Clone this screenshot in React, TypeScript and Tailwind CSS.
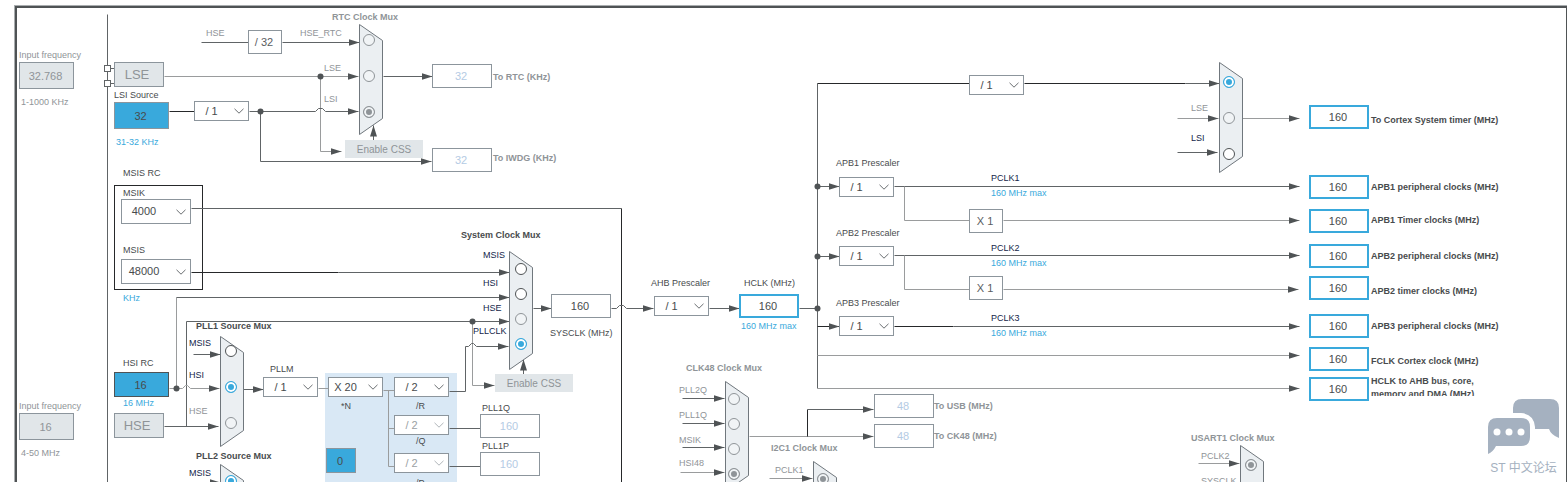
import { useState } from "react";

const tones = {
    text: "text-[#484b4d]",
    navy: "text-[#14264a]",
    muted: "text-[#8f9498]",
    blue: "text-[#39a9dc]",
}

const fieldTones = {
    plain: "border border-[#8c959c] bg-white text-[#484b4d]",
    faded: "border border-[#8c959c] bg-white text-[#b4cbe4]",
    editable: "border-2 border-[#39a9dc] bg-white text-[#484b4d]",
    source: "border border-[#8c959c] bg-[#39a9dc] text-[#484b4d]",
    activeSource: "border border-[#4f5355] bg-[#39a9dc] text-[#484b4d]",
    disabled: "border border-[#8c959c] bg-[#e1e6e9] text-[#8f9498]",
}

const strokes = {
    mid: "#606466",
    light: "#9a9c9d",
    dark: "#26282a",
}

type Tone = keyof typeof tones
type FieldTone = keyof typeof fieldTones
type Stroke = keyof typeof strokes

function Label({ at, text, tone = "text", bold = false, htmlFor }: { at: string, text: string, tone?: Tone, bold?: boolean, htmlFor?: string }) {
    const style = `absolute whitespace-nowrap text-[9px] leading-3 ${at} ${tones[tone]} ${bold ? "font-bold" : ""}`

    if (htmlFor) {
        return <label htmlFor={htmlFor} className={style}>{text}</label>
    }
    return <span className={style}>{text}</span>
}

function Field({ id, at, value, tone = "plain", size = "h-6 w-[60px]", name }: { id: string, at: string, value: string, tone?: FieldTone, size?: string, name?: string }) {
    const [current, setCurrent] = useState(value)

    return (
        <input
            id={id}
            type="text"
            value={current}
            onChange={(e) => setCurrent(e.target.value)}
            aria-label={name}
            className={`absolute pr-0.5 text-center text-[11px] outline-none ${size} ${at} ${fieldTones[tone]}`}
        />
    )
}

function Prescaler({ id, at, value, options = [], size = "h-5 w-[55px] pr-5", faded = false, name }: { id: string, at: string, value: string, options?: string[], size?: string, faded?: boolean, name?: string }) {
    return (
        <div className={`absolute ${at}`}>
            <select
                id={id}
                defaultValue={value}
                aria-label={name}
                className={`block appearance-none border border-[#8c959c] bg-white text-center text-[11px] [text-align-last:center] ${size} ${faded ? "text-[#9a9fa3]" : "text-[#484b4d]"}`}
            >
                <option>{value}</option>
                {options.map((o) => <option key={o}>{o}</option>)}
            </select>
            <svg
                viewBox="0 0 10 6"
                className={`pointer-events-none absolute inset-y-0 right-[5px] my-auto h-1.5 w-2.5 ${faded ? "text-[#b0b5b9]" : "text-[#6a6e71]"}`}
                fill="none"
                stroke="currentColor"
            >
                <path d="M0.5 0.8L5 5.2L9.5 0.8" />
            </svg>
        </div>
    )
}

function Operator({ at, text }: { at: string, text: string }) {
    return (
        <div className={`absolute flex h-6 w-[34px] items-center justify-center border border-[#8c959c] bg-white pr-0.5 text-[11px] text-[#5a5d5f] ${at}`}>
            {text}
        </div>
    )
}

function Oscillator({ at, text }: { at: string, text: string }) {
    return (
        <button className={`absolute h-[25px] w-[50px] border border-[#8c959c] bg-[#e1e6e9] pr-1 text-[13px] leading-4 text-[#8f9498] ${at}`}>
            {text}
        </button>
    )
}

type Choice = { name: string, checked?: boolean, off?: boolean }

function Mux({ name, at, height, choices, spacing }: { name: string, at: string, height: number, choices: Choice[], spacing: string }) {
    return (
        <div role="radiogroup" aria-label={name} className={`absolute w-6 ${at}`}>
            <svg className="absolute left-0 top-0 overflow-visible" width="24" height={height}>
                <polygon points={`0,0 23,16 23,${height - 16} 0,${height}`} transform="translate(.5 .5)" fill="#ebeff2" stroke="#70777d" />
            </svg>
            <div className={`relative flex flex-col items-start ${spacing}`}>
                {choices.map((c) => (
                    <input
                        key={c.name}
                        type="radio"
                        name={name}
                        aria-label={c.name}
                        defaultChecked={c.checked}
                        className={c.off
                            ? "size-3 shrink-0 appearance-none rounded-full border border-[#8f9498] bg-[#f1f4f6] checked:bg-[#8f9498] checked:shadow-[inset_0_0_0_2px_#f1f4f6]"
                            : "size-3 shrink-0 appearance-none rounded-full border border-[#4f5355] bg-white checked:border-[#39a9dc] checked:bg-[#39a9dc] checked:shadow-[inset_0_0_0_2px_#ffffff]"}
                    />
                ))}
            </div>
        </div>
    )
}

// d, colour, and whether the wire ends in an arrow head
const wires: [string, Stroke, boolean][] = [
    // RTC / IWDG
    ["M107 14V900", "mid", false],
    ["M110 68H114M110 83H114", "mid", false],
    ["M201 42H248", "mid", false],
    ["M282 42H359", "mid", true],
    ["M164 76H358", "light", true],
    ["M320 76V151H341", "light", true],
    ["M169 111H194", "dark", false],
    ["M249 111H315L318 108H322L325 111H358", "mid", true],
    ["M260 111V161H431", "mid", true],
    ["M383 76H432", "mid", true],
    ["M373 140V125", "mid", true],
    // MSIS RC
    ["M191 208H621", "mid", false],
    ["M621 208V900", "dark", false],
    ["M191 272H338", "dark", false],
    ["M338 272H509", "mid", true],
    // HSI and HSE
    ["M176 388V297", "light", false],
    ["M176 297H509", "mid", true],
    ["M186 426V321H509", "mid", true],
    ["M472 321V385H494", "light", true],
    ["M169 388H182L185 385H187L190 388H219", "light", true],
    ["M164 426H218", "mid", true],
    // PLL1
    ["M193 354H220", "mid", true],
    ["M243 389H263", "mid", true],
    ["M193 482H220", "mid", true],
    ["M318 388H328", "light", false],
    ["M383 390H394M388 390V466H394M388 428H394", "light", false],
    ["M449 391H465V346H468L471 343H473L476 346H508", "mid", true],
    ["M449 428H480M449 466H480", "mid", false],
    // system clock
    ["M523 374V359", "mid", true],
    ["M533 308H551", "mid", true],
    ["M611 308H616L619 305H623L626 308H653", "mid", true],
    ["M709 308H739", "mid", true],
    ["M799 308H817", "mid", false],
    // buses
    ["M817 388V83", "mid", false],
    ["M817 83H969M1024 83H1185", "dark", false],
    ["M1185 83H1219", "mid", true],
    ["M817 186H839", "mid", true],
    ["M817 256H839", "mid", true],
    ["M817 326H839", "dark", true],
    ["M894 186H1299", "mid", true],
    ["M904 186V220H969", "light", false],
    ["M1003 220H1299", "light", true],
    ["M894 255H1299", "mid", true],
    ["M904 255V289H969", "light", false],
    ["M1003 289H1298", "light", true],
    ["M894 326H953", "dark", false],
    ["M953 326H1299", "mid", true],
    ["M817 355H1299", "light", true],
    ["M817 388H1299", "light", true],
    ["M1177 118H1218", "light", true],
    ["M1177 152H1217", "mid", true],
    ["M1242 118H1299", "light", true],
    // CLK48, I2C1, USART1
    ["M682 398H724", "mid", true],
    ["M682 423H724", "mid", true],
    ["M682 447H724", "mid", true],
    ["M680 472H724", "light", true],
    ["M749 436H873", "light", true],
    ["M807 436V409", "dark", false],
    ["M807 409H873", "mid", true],
    ["M769 478H812", "light", true],
    ["M1198 463H1239", "light", true],
]

const dots = [[320, 76], [260, 111], [176, 388], [472, 321], [817, 186], [817, 256], [817, 308]]

function Wires() {
    return (
        <svg className="absolute inset-0 h-full w-full" fill="none">
            <defs>
                <marker id="head" markerUnits="userSpaceOnUse" markerWidth="12" markerHeight="8" refX="11" refY="4" orient="auto">
                    <path d="M0 0.5L11 4L0 7.5z" fill="#4f5355" />
                </marker>
            </defs>
            <rect x="325" y="373" width="132" height="600" fill="#d9e8f5" />
            <g transform="translate(.5 .5)">
                <rect x="114" y="185" width="88" height="104" stroke="#26282a" />
                {wires.map(([d, stroke, arrow]) => (
                    <path key={d} d={d} stroke={strokes[stroke]} markerEnd={arrow ? "url(#head)" : undefined} />
                ))}
                {dots.map(([x, y]) => <circle key={`${x}-${y}`} cx={x} cy={y} r="3" fill="#4f5355" />)}
                <rect x="104" y="65" width="6" height="6" fill="#fff" stroke="#606466" />
                <rect x="104" y="80" width="6" height="6" fill="#fff" stroke="#606466" />
            </g>
        </svg>
    )
}

const outputs = [
    { id: "cortex", box: "left-[1309px] top-[105px]", label: "left-[1371px] top-[114px]", text: "To Cortex System timer (MHz)" },
    { id: "apb1p", box: "left-[1309px] top-[175px]", label: "left-[1371px] top-[181px]", text: "APB1 peripheral clocks (MHz)" },
    { id: "apb1t", box: "left-[1309px] top-[209px]", label: "left-[1371px] top-[214px]", text: "APB1 Timer clocks (MHz)" },
    { id: "apb2p", box: "left-[1309px] top-[244px]", label: "left-[1371px] top-[250px]", text: "APB2 peripheral clocks (MHz)" },
    { id: "apb2t", box: "left-[1309px] top-[276px]", label: "left-[1371px] top-[285px]", text: "APB2 timer clocks (MHz)" },
    { id: "apb3p", box: "left-[1309px] top-[314px]", label: "left-[1371px] top-[320px]", text: "APB3 peripheral clocks (MHz)" },
    { id: "fclk", box: "left-[1309px] top-[347px]", label: "left-[1371px] top-[355px]", text: "FCLK Cortex clock (MHz)" },
]

function RtcSection() {
    return (
        <>
            <Label at="left-[19px] top-[49px]" text="Input frequency" tone="muted" htmlFor="lse-in" />
            <Field id="lse-in" at="left-[19px] top-[62px]" size="h-[27px] w-[55px]" value="32.768" tone="disabled" />
            <Label at="left-[21px] top-[96px]" text="1-1000 KHz" tone="muted" />
            <Oscillator at="left-[114px] top-[62px]" text="LSE" />
            <Label at="left-[114px] top-[89px]" text="LSI Source" htmlFor="lsi" />
            <Field id="lsi" at="left-[114px] top-[102px]" size="h-[27px] w-[55px]" value="32" tone="source" />
            <Label at="left-[116px] top-[136px]" text="31-32 KHz" tone="blue" />
            <Prescaler id="lsi-div" name="LSI divider" at="left-[194px] top-[101px]" value="/ 1" options={["/ 128"]} />

            <Label at="left-[206px] top-[27px]" text="HSE" tone="muted" />
            <Operator at="left-[248px] top-[30px]" text="/ 32" />
            <Label at="left-[300px] top-[27px]" text="HSE_RTC" tone="muted" />
            <Label at="left-[324px] top-[62px]" text="LSE" tone="muted" />
            <Label at="left-[324px] top-[93px]" text="LSI" tone="muted" />
            <Label at="left-[332px] top-[11px]" text="RTC Clock Mux" tone="muted" bold />
            <Mux
                name="RTC Clock Mux"
                at="left-[359px] top-6"
                height={110}
                spacing="gap-6 pl-1 pt-2.5"
                choices={[{ name: "HSE_RTC", off: true }, { name: "LSE", off: true }, { name: "LSI", off: true, checked: true }]}
            />
            <button className="absolute left-[345px] top-[140px] h-[18px] w-[78px] bg-[#e1e6e9] text-[10px] text-[#8f9498]">Enable CSS</button>
            <Field id="rtc" at="left-[432px] top-[64px]" value="32" tone="faded" />
            <Label at="left-[493px] top-[71px]" text="To RTC (KHz)" tone="muted" bold htmlFor="rtc" />
            <Field id="iwdg" at="left-[432px] top-[148px]" value="32" tone="faded" />
            <Label at="left-[493px] top-[152px]" text="To IWDG (KHz)" tone="muted" bold htmlFor="iwdg" />
        </>
    )
}

function OscillatorSection() {
    return (
        <>
            <Label at="left-[123px] top-[167px]" text="MSIS RC" />
            <Label at="left-[123px] top-[187px]" text="MSIK" htmlFor="msik" />
            <Prescaler id="msik" at="left-[121px] top-[199px]" size="h-[25px] w-[70px] pr-6" value="4000" />
            <Label at="left-[123px] top-[244px]" text="MSIS" htmlFor="msis" />
            <Prescaler id="msis" at="left-[121px] top-[259px]" size="h-[25px] w-[70px] pr-6" value="48000" />
            <Label at="left-[123px] top-[292px]" text="KHz" tone="blue" />

            <Label at="left-[123px] top-[357px]" text="HSI RC" htmlFor="hsi" />
            <Field id="hsi" at="left-[114px] top-[372px]" size="h-[25px] w-[55px]" value="16" tone="activeSource" />
            <Label at="left-[123px] top-[397px]" text="16 MHz" tone="blue" />
            <Label at="left-[19px] top-[400px]" text="Input frequency" tone="muted" htmlFor="hse-in" />
            <Field id="hse-in" at="left-[19px] top-[413px]" size="h-[27px] w-[55px]" value="16" tone="disabled" />
            <Label at="left-[21px] top-[447px]" text="4-50 MHz" tone="muted" />
            <Oscillator at="left-[114px] top-[413px]" text="HSE" />
        </>
    )
}

function PllSection() {
    return (
        <>
            <Label at="left-[196px] top-[320px]" text="PLL1 Source Mux" bold />
            <Label at="left-[189px] top-[337px]" text="MSIS" tone="navy" />
            <Label at="left-[189px] top-[369px]" text="HSI" tone="navy" />
            <Label at="left-[189px] top-[405px]" text="HSE" tone="muted" />
            <Mux
                name="PLL1 Source Mux"
                at="left-[220px] top-[336px]"
                height={110}
                spacing="gap-6 pl-[5px] pt-[9px]"
                choices={[{ name: "MSIS" }, { name: "HSI", checked: true }, { name: "HSE", off: true }]}
            />
            <Label at="left-[270px] top-[363px]" text="PLLM" htmlFor="pllm" />
            <Prescaler id="pllm" at="left-[263px] top-[377px]" value="/ 1" options={["/ 2"]} />
            <Prescaler id="plln" at="left-[328px] top-[377px]" value="X 20" options={["X 21"]} />
            <Label at="left-[341px] top-[400px]" text="*N" htmlFor="plln" />
            <Field id="fracn" name="FRACN" at="left-[326px] top-[448px]" size="h-[25px] w-[30px]" value="0" tone="source" />
            <Prescaler id="pllr" at="left-[394px] top-[377px]" value="/ 2" />
            <Label at="left-[416px] top-[400px]" text="/R" htmlFor="pllr" />
            <Prescaler id="pllq" at="left-[394px] top-[415px]" value="/ 2" faded />
            <Label at="left-[416px] top-[435px]" text="/Q" htmlFor="pllq" />
            <Prescaler id="pllp" at="left-[394px] top-[453px]" value="/ 2" faded />
            <Label at="left-[416px] top-[477px]" text="/P" htmlFor="pllp" />
            <Label at="left-[482px] top-[402px]" text="PLL1Q" htmlFor="pll1q" />
            <Field id="pll1q" at="left-[480px] top-[414px]" value="160" tone="faded" />
            <Label at="left-[482px] top-[440px]" text="PLL1P" htmlFor="pll1p" />
            <Field id="pll1p" at="left-[480px] top-[452px]" value="160" tone="faded" />

            <Label at="left-[196px] top-[450px]" text="PLL2 Source Mux" bold />
            <Label at="left-[189px] top-[467px]" text="MSIS" tone="navy" />
            <Mux name="PLL2 Source Mux" at="left-[220px] top-[464px]" height={110} spacing="gap-6 pl-[5px] pt-[11px]" choices={[{ name: "MSIS", checked: true }]} />
        </>
    )
}

function SystemClockSection() {
    return (
        <>
            <Label at="left-[461px] top-[229px]" text="System Clock Mux" bold />
            <Label at="left-[483px] top-[249px]" text="MSIS" tone="navy" />
            <Label at="left-[483px] top-[277px]" text="HSI" tone="navy" />
            <Label at="left-[483px] top-[302px]" text="HSE" tone="navy" />
            <Label at="left-[473px] top-[325px]" text="PLLCLK" tone="navy" />
            <Mux
                name="System Clock Mux"
                at="left-[509px] top-[251px]"
                height={118}
                spacing="gap-[13px] pl-1.5 pt-3"
                choices={[{ name: "MSIS" }, { name: "HSI" }, { name: "HSE", off: true }, { name: "PLLCLK", checked: true }]}
            />
            <button className="absolute left-[495px] top-[374px] h-[18px] w-[78px] bg-[#e1e6e9] text-[10px] text-[#8f9498]">Enable CSS</button>
            <Field id="sysclk" at="left-[551px] top-[294px]" value="160" />
            <Label at="left-[550px] top-[327px]" text="SYSCLK (MHz)" htmlFor="sysclk" />
            <Label at="left-[651px] top-[277px]" text="AHB Prescaler" htmlFor="ahb" />
            <Prescaler id="ahb" at="left-[654px] top-[296px]" value="/ 1" options={["/ 2"]} />
            <Label at="left-[744px] top-[277px]" text="HCLK (MHz)" htmlFor="hclk" />
            <Field id="hclk" at="left-[739px] top-[294px]" value="160" tone="editable" />
            <Label at="left-[741px] top-[320px]" text="160 MHz max" tone="blue" />
        </>
    )
}

function BusSection() {
    return (
        <>
            <Prescaler id="cortex-div" name="Cortex prescaler" at="left-[969px] top-[75px]" value="/ 1" options={["/ 8"]} />
            <Label at="left-[1191px] top-[102px]" text="LSE" tone="muted" />
            <Label at="left-[1191px] top-[132px]" text="LSI" tone="navy" />
            <Mux
                name="Cortex Clock Mux"
                at="left-[1219px] top-[62px]"
                height={110}
                spacing="gap-6 pl-1 pt-3.5"
                choices={[{ name: "Prescaler", checked: true }, { name: "LSE", off: true }, { name: "LSI" }]}
            />

            <Label at="left-[836px] top-[157px]" text="APB1 Prescaler" htmlFor="apb1" />
            <Prescaler id="apb1" at="left-[839px] top-[177px]" value="/ 1" options={["/ 2"]} />
            <Label at="left-[991px] top-[172px]" text="PCLK1" tone="navy" />
            <Label at="left-[991px] top-[187px]" text="160 MHz max" tone="blue" />
            <Operator at="left-[969px] top-[209px]" text="X 1" />

            <Label at="left-[836px] top-[227px]" text="APB2 Prescaler" htmlFor="apb2" />
            <Prescaler id="apb2" at="left-[839px] top-[246px]" value="/ 1" options={["/ 2"]} />
            <Label at="left-[991px] top-[242px]" text="PCLK2" tone="navy" />
            <Label at="left-[991px] top-[257px]" text="160 MHz max" tone="blue" />
            <Operator at="left-[969px] top-[276px]" text="X 1" />

            <Label at="left-[836px] top-[297px]" text="APB3 Prescaler" htmlFor="apb3" />
            <Prescaler id="apb3" at="left-[839px] top-[316px]" value="/ 1" options={["/ 2"]} />
            <Label at="left-[991px] top-[312px]" text="PCLK3" tone="navy" />
            <Label at="left-[991px] top-[327px]" text="160 MHz max" tone="blue" />

            {outputs.map((o) => (
                <div key={o.id}>
                    <Field id={o.id} at={o.box} value="160" tone="editable" />
                    <Label at={o.label} text={o.text} bold htmlFor={o.id} />
                </div>
            ))}
            <Field id="ahb-bus" at="left-[1309px] top-[377px]" value="160" tone="editable" />
            <label htmlFor="ahb-bus" className="absolute left-[1371px] top-[375px] h-[21px] w-[120px] overflow-hidden text-[9px] font-bold leading-[13px] text-[#484b4d]">
                HCLK to AHB bus, core, memory and DMA (MHz)
            </label>
        </>
    )
}

function PeripheralSection() {
    return (
        <>
            <Label at="left-[686px] top-[362px]" text="CLK48 Clock Mux" tone="muted" bold />
            <Label at="left-[679px] top-[384px]" text="PLL2Q" tone="muted" />
            <Label at="left-[679px] top-[409px]" text="PLL1Q" tone="muted" />
            <Label at="left-[679px] top-[434px]" text="MSIK" tone="muted" />
            <Label at="left-[679px] top-[457px]" text="HSI48" tone="muted" />
            <Mux
                name="CLK48 Clock Mux"
                at="left-[725px] top-[381px]"
                height={110}
                spacing="gap-[13px] pl-[3px] pt-3"
                choices={[{ name: "PLL2Q", off: true }, { name: "PLL1Q", off: true }, { name: "MSIK", off: true }, { name: "HSI48", off: true, checked: true }]}
            />
            <Field id="usb" at="left-[874px] top-[394px]" value="48" tone="faded" />
            <Label at="left-[934px] top-[400px]" text="To USB (MHz)" tone="muted" bold htmlFor="usb" />
            <Field id="ck48" at="left-[874px] top-[424px]" value="48" tone="faded" />
            <Label at="left-[934px] top-[430px]" text="To CK48 (MHz)" tone="muted" bold htmlFor="ck48" />

            <Label at="left-[771px] top-[442px]" text="I2C1 Clock Mux" tone="muted" bold />
            <Label at="left-[775px] top-[464px]" text="PCLK1" tone="muted" />
            <Mux name="I2C1 Clock Mux" at="left-[813px] top-[461px]" height={110} spacing="gap-6 pl-1 pt-3" choices={[{ name: "PCLK1", off: true, checked: true }]} />

            <Label at="left-[1191px] top-[432px]" text="USART1 Clock Mux" tone="muted" bold />
            <Label at="left-[1201px] top-[450px]" text="PCLK2" tone="muted" />
            <Label at="left-[1201px] top-[475px]" text="SYSCLK" tone="muted" />
            <Mux name="USART1 Clock Mux" at="left-[1240px] top-[445px]" height={110} spacing="gap-6 pl-[5px] pt-3.5" choices={[{ name: "PCLK2", off: true, checked: true }]} />
        </>
    )
}

function ForumMark() {
    return (
        <div className="absolute left-[1488px] top-[399px] flex flex-col items-center text-[#a5b1c0]">
            <svg width="71" height="55" viewBox="0 0 71 55" fill="currentColor">
                <path d="M25 14V9Q25 0 34 0H62Q71 0 71 9V39Q63 36 61 30H47V28Q46 15 33 14z" />
                <path d="M9 19H33Q42 19 42 28V38Q42 47 33 47H8Q5 53 0 55V28Q0 19 9 19z" />
                <circle cx="9" cy="33" r="3.5" fill="#fff" />
                <circle cx="21" cy="33" r="3.5" fill="#fff" />
                <circle cx="33" cy="33" r="3.5" fill="#fff" />
            </svg>
            <span className="whitespace-nowrap pt-1.5 font-['Liberation_Sans','Noto_Sans_CJK_SC',sans-serif] text-[12px] leading-4">ST 中文论坛</span>
        </div>
    )
}

export default function App() {
    return (
        <main className="relative h-screen overflow-hidden bg-white pl-[15px] pt-1.5 font-['Liberation_Sans',Arial,sans-serif]">
            <div className="h-full border-l-2 border-r border-t-2 border-[#4f5355] shadow-[0_0_0_1px_#a9adaf]" />
            <Wires />
            <RtcSection />
            <OscillatorSection />
            <PllSection />
            <SystemClockSection />
            <BusSection />
            <PeripheralSection />
            <ForumMark />
        </main>
    )
}
